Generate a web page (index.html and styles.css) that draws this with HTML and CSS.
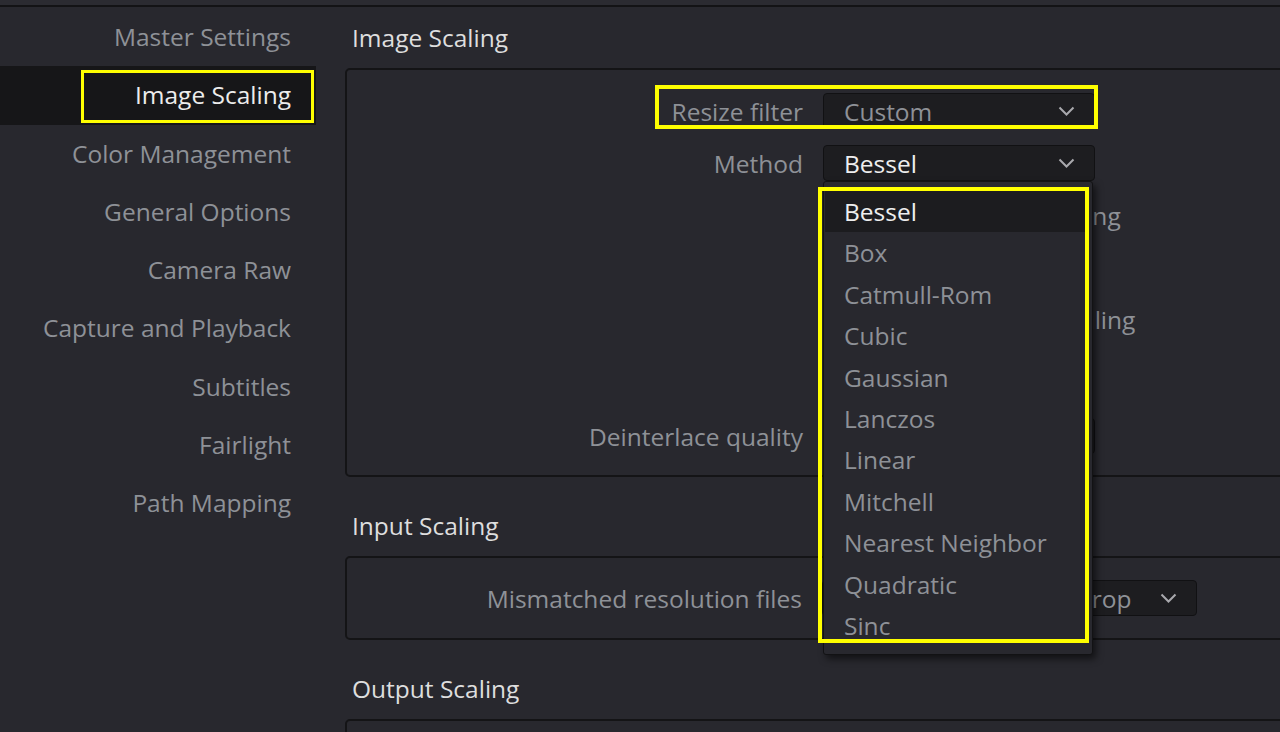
FILE: index.html
```html
<!DOCTYPE html>
<html lang="en">
<head>
<meta charset="utf-8">
<title>Project Settings - Image Scaling</title>
<link rel="stylesheet" href="styles.css">
</head>
<body>
<div class="topbar"></div>
<div class="layout">
  <nav class="sidebar">
    <div class="nav-item">Master Settings</div>
    <div class="nav-item active">Image Scaling<span class="mark mark-nav"></span></div>
    <div class="nav-item">Color Management</div>
    <div class="nav-item">General Options</div>
    <div class="nav-item">Camera Raw</div>
    <div class="nav-item">Capture and Playback</div>
    <div class="nav-item">Subtitles</div>
    <div class="nav-item">Fairlight</div>
    <div class="nav-item">Path Mapping</div>
  </nav>

  <main class="content">
    <h2 class="section-title first">Image Scaling</h2>
    <section class="panel panel-image">
      <div class="row">
        <span class="label">Resize filter</span>
        <div class="select">
          <span class="value">Custom</span>
          <svg class="chevron" width="17" height="10" viewBox="0 0 17 10"><path d="M1.5 1.5 L8.5 8.5 L15.5 1.5"/></svg>
        </div>
        <span class="mark mark-filter"></span>
      </div>
      <div class="row">
        <span class="label">Method</span>
        <div class="select open">
          <span class="value">Bessel</span>
          <svg class="chevron" width="17" height="10" viewBox="0 0 17 10"><path d="M1.5 1.5 L8.5 8.5 L15.5 1.5"/></svg>
          <ul class="menu">
            <li class="current">Bessel</li>
            <li>Box</li>
            <li>Catmull-Rom</li>
            <li>Cubic</li>
            <li>Gaussian</li>
            <li>Lanczos</li>
            <li>Linear</li>
            <li>Mitchell</li>
            <li>Nearest Neighbor</li>
            <li>Quadratic</li>
            <li>Sinc</li>
            <span class="mark mark-menu"></span>
          </ul>
        </div>
      </div>
      <div class="row">
        <span class="label"></span>
        <label class="check"><span class="box"></span><span class="check-text">Apply edge anti-aliasing</span></label>
      </div>
      <div class="row">
        <span class="label"></span>
        <label class="check"><span class="box"></span><span class="check-text">Sharpen</span></label>
      </div>
      <div class="row">
        <span class="label"></span>
        <label class="check"><span class="box"></span><span class="check-text">Use linear light upscaling</span></label>
      </div>
      <div class="row">
        <span class="label"></span>
        <label class="check"><span class="box"></span><span class="check-text">Smooth</span></label>
      </div>
      <div class="row row-gap">
        <span class="label">Deinterlace quality</span>
        <div class="select">
          <span class="value">High</span>
          <svg class="chevron" width="17" height="10" viewBox="0 0 17 10"><path d="M1.5 1.5 L8.5 8.5 L15.5 1.5"/></svg>
        </div>
      </div>
    </section>

    <h2 class="section-title">Input Scaling</h2>
    <section class="panel panel-input">
      <div class="row row-wide">
        <span class="label">Mismatched resolution files</span>
        <div class="select">
          <span class="value">Scale full frame with crop</span>
          <svg class="chevron" width="17" height="10" viewBox="0 0 17 10"><path d="M1.5 1.5 L8.5 8.5 L15.5 1.5"/></svg>
        </div>
      </div>
    </section>

    <h2 class="section-title">Output Scaling</h2>
    <section class="panel panel-output"></section>
  </main>
</div>
</body>
</html>
```

FILE: styles.css
```css
* {
  box-sizing: border-box;
}

html, body {
  margin: 0;
  padding: 0;
  height: 100%;
}

body {
  background: #28282e;
  color: #8e9197;
  font-family: "Open Sans", "Noto Sans", sans-serif;
  font-size: 24.5px;
  overflow: hidden;
}

.topbar {
  height: 7px;
  background: #2b2b31;
  border-bottom: 2px solid #131315;
}

.layout {
  display: flex;
  align-items: flex-start;
}

/* ---------- left navigation ---------- */
.sidebar {
  width: 316px;
  flex: none;
  padding-top: 1px;
}

.nav-item {
  position: relative;
  height: 58.3px;
  line-height: 58.3px;
  padding-right: 25px;
  text-align: right;
  white-space: nowrap;
  color: #8e9197;
}

.nav-item.active {
  background: #161618;
  color: #ececec;
}

/* highlight frames */
.mark {
  position: absolute;
  border: 4px solid #ffff00;
  pointer-events: none;
  z-index: 5;
}

.mark-nav {
  left: 81px;
  top: 4px;
  width: 233px;
  height: 53px;
  border-width: 3px;
}

/* ---------- main column ---------- */
.content {
  margin-left: 29px;
  width: 1000px;
  flex: none;
}

.section-title {
  margin: 34px 0 15px;
  padding-left: 7px;
  height: 30px;
  line-height: 30px;
  font-size: 24.5px;
  font-weight: 400;
  color: #dedede;
  white-space: nowrap;
}

.section-title.first {
  margin-top: 16px;
}

.panel {
  position: relative;
  border: 2px solid #141416;
  border-radius: 5px;
  background: #28282e;
}

.panel-image {
  padding: 15px 0 13px;
}

.panel-input {
  padding: 22px 0;
}

.panel-output {
  height: 200px;
}

.row {
  position: relative;
  display: grid;
  grid-template-columns: 456px 272px;
  column-gap: 20px;
  align-items: center;
  height: 52px;
}

.row-gap {
  margin-top: 13px;
}

.row-wide {
  grid-template-columns: 455px 375px;
  height: 36px;
}

.label {
  text-align: right;
  white-space: nowrap;
  color: #8e9197;
}

.select {
  position: relative;
  display: flex;
  align-items: center;
  justify-content: space-between;
  height: 36px;
  padding: 0 19px 0 20px;
  background: #1d1d20;
  border: 1px solid #111113;
  border-radius: 4px;
  white-space: nowrap;
}

.select .value {
  color: #8e9197;
}

.select.open .value {
  color: #eeeeee;
}

.chevron {
  flex: none;
}

.chevron path {
  fill: none;
  stroke: #a9a9ad;
  stroke-width: 2;
}

.mark-filter {
  left: 308px;
  top: 0;
  width: 443px;
  height: 44px;
}

/* ---------- open dropdown list ---------- */
.menu {
  position: absolute;
  left: -1px;
  top: calc(100% + 1px);
  width: 270px;
  margin: 0;
  padding: 9px 0 8px;
  list-style: none;
  background: #28282e;
  border: 1px solid #121214;
  border-radius: 3px;
  box-shadow: 3px 4px 7px rgba(0, 0, 0, 0.55);
  z-index: 4;
}

.menu li {
  height: 41.4px;
  line-height: 41.4px;
  margin: 0 6px 0 1px;
  padding-left: 19px;
  color: #8e9197;
  white-space: nowrap;
}

.menu li.current {
  background: #1c1c1f;
  color: #eeeeee;
}

.mark-menu {
  left: -6px;
  top: 5px;
  width: 271px;
  height: 456px;
}

/* ---------- checkbox options ---------- */
.check {
  display: flex;
  align-items: center;
  gap: 10px;
  white-space: nowrap;
}

.check .box {
  width: 18px;
  height: 18px;
  flex: none;
  background: #1d1d20;
  border: 1px solid #111113;
  border-radius: 3px;
}

.check-text {
  color: #8e9197;
}
```
